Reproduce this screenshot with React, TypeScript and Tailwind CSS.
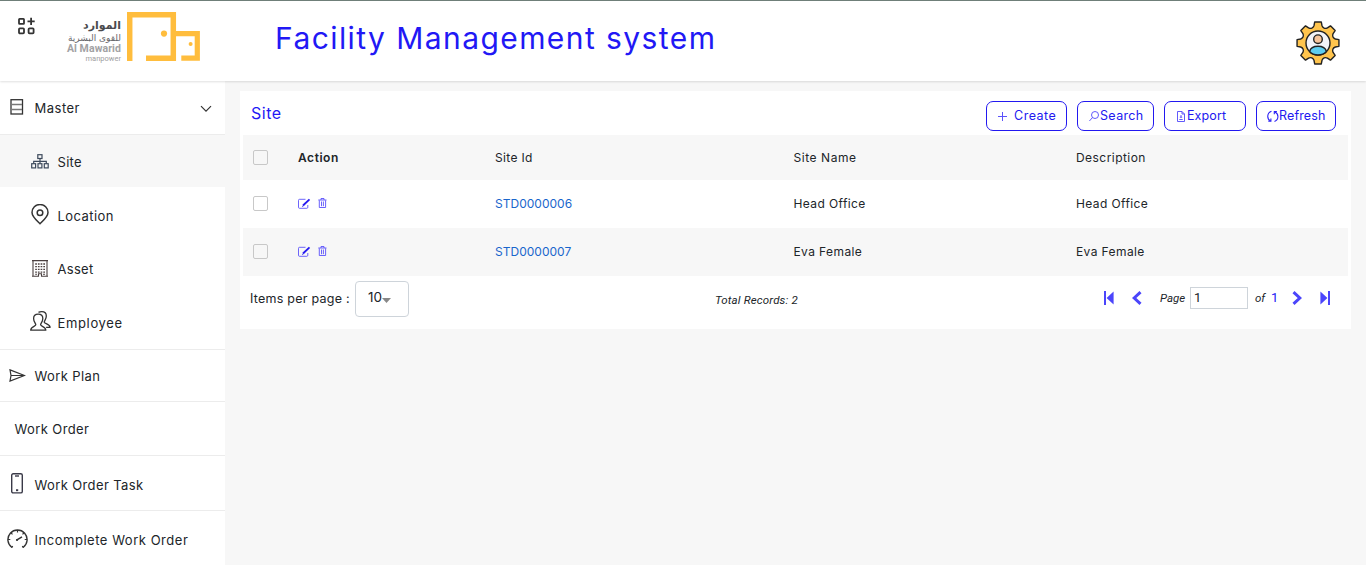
import React from "react";

type IconProps = { className?: string };

const AppsIcon = () => (
  <svg width="19" height="18" viewBox="0 0 19 18" fill="none" stroke="#333" strokeWidth="1.8">
    <rect x="2" y="1.9" width="5" height="5" rx="0.6" />
    <rect x="2" y="11.4" width="5" height="5" rx="0.9" />
    <rect x="11.6" y="11.4" width="5" height="5" rx="0.9" />
    <path d="M14.1 0.8v7.2M10.5 4.4h7.2" />
  </svg>
);

const LogoMark = () => (
  <svg width="74" height="50" viewBox="0 0 74 50" fill="none" stroke="#ffbd3d" strokeWidth="5.5">
    <path d="M2.7 49V2.8H46.3V46.2H19" />
    <path d="M46 21.7H70.3V46.2H54.3" strokeWidth="5.200" />
    <circle cx="37" cy="21.6" r="3.1" fill="#ffbd3d" stroke="none" />
    <circle cx="63.600" cy="32" r="2" fill="#ffbd3d" stroke="none" />
  </svg>
);

const gearPath = (() => {
  const pts: string[] = [];
  for (let i = 0; i < 8; i++) {
    const base = (i * Math.PI) / 4 - Math.PI / 2;
    const at = (r: number, d: number) => {
      const a = base + (d * Math.PI) / 180;
      return `${(22 + r * Math.cos(a)).toFixed(2)} ${(22 + r * Math.sin(a)).toFixed(2)}`;
    };
    pts.push(`${i === 0 ? "M" : "L"}${at(17.8, -13)}`);
    pts.push(`L${at(21.2, -9)}L${at(21.2, 9)}L${at(17.8, 13)}`);
    pts.push(`Q${at(14.6, 22.5)} ${at(17.8, 32)}`);
  }
  return pts.join("") + "Z";
})();

const ProfileIcon = () => (
  <svg width="44" height="44" viewBox="0 0 44 44" stroke="#222" strokeWidth="1.4" strokeLinejoin="round">
    <path d={gearPath} fill="#ffc44d" />
    <circle cx="22" cy="22" r="12" fill="#f3f3f8" />
    <path d="M13.6 30.5C14.5 26.8 18 25.3 22 25.3s7.500 1.500 8.400 5.200C28.500 32.700 25.500 34 22 34s-6.500-1.300-8.400-3.500z" fill="#5ecdf0" />
    <circle cx="22" cy="18.200" r="4.300" fill="#f6c49c" />
  </svg>
);

const MasterIcon = () => (
  <svg width="14" height="16" viewBox="0 0 14 16" fill="none" stroke="#333">
    <rect x="1" y="0.700" width="11.500" height="14.300" strokeWidth="1.300" />
    <path d="M2 5.500h10M2 10.500h10" strokeWidth="1.500" stroke="#777" />
  </svg>
);

const ChevronIcon = () => (
  <svg width="12" height="8" viewBox="0 0 12 8" fill="none" stroke="#333" strokeWidth="1.200">
    <path d="M1 1.200l5 5 5-5" />
  </svg>
);

const SiteIcon = () => (
  <svg width="18" height="15" viewBox="0 0 18 15" fill="none" stroke="#3d4a5c" strokeWidth="1.200">
    <rect x="6.800" y="0.700" width="4.200" height="3.800" />
    <path d="M9 4.500v5M2.700 9.500V7.300h12.600v2.200" />
    <rect x="0.700" y="9.700" width="3.900" height="4.200" />
    <rect x="7" y="9.700" width="3.900" height="4.200" />
    <rect x="13.300" y="9.700" width="3.900" height="4.200" />
  </svg>
);

const LocationIcon = () => (
  <svg width="18" height="21" viewBox="0 0 18 21" fill="none" stroke="#333" strokeWidth="1.500">
    <path d="M9 19.800C7 17.800 1 12.800 1 8.500a8 8 0 0 1 16 0c0 4.300-6 9.300-8 11.300z" />
    <circle cx="9" cy="8.800" r="2.800" />
  </svg>
);

const AssetIcon = () => (
  <svg width="16" height="17" viewBox="0 0 16 17" fill="none" stroke="#4b4040" strokeWidth="1.100">
    <path d="M0 .600h16M1 .600V16M15 .600V16M0 16.300h6.500v-2.500h3v2.500H16" />
    <path d="M3.200 4h9.800M3.200 6.700h9.800M3.200 9.400h9.800M3.200 12.100h9.800" strokeWidth="1.300" strokeDasharray="1.700 1" />
    <path d="M3.200 14.300H5M11 14.300h2" />
  </svg>
);

const EmployeeIcon = () => (
  <svg width="21" height="20" viewBox="0 0 21 20" fill="none" stroke="#333" strokeWidth="1.300" strokeLinejoin="round">
    <path d="M5.800 13.800C5.700 12.300 3.600 10.700 3.600 7.400c0-3 1.900-4.300 4.600-4.300s4.600 1.300 4.600 4.300c0 3.300-2.100 4.900-2.200 6.400.1 1.600 5.200 1.700 5.200 5.400H.700c0-3.700 5-3.800 5.100-5.400z" />
    <path d="M8.500 1.400C9.300.900 10.500.700 11.800.700c2.700 0 4.500 1.300 4.500 4.200 0 3.300-2 4.800-2.100 6.300.1 1.600 5.700 1.600 5.900 5.200h-4" />
  </svg>
);

const SendIcon = () => (
  <svg width="17" height="13" viewBox="0 0 17 13" fill="none" stroke="#333" strokeWidth="1.200">
    <path d="M1 .900L15.500 6.500 1 12.100 2 6.500zM2.300 6.500h12" />
  </svg>
);

const PhoneIcon = () => (
  <svg width="12" height="21" viewBox="0 0 12 21" fill="none" stroke="#3a3a48" strokeWidth="1.400">
    <rect x=".700" y=".700" width="10.600" height="19.200" rx="1.500" />
    <path d="M4 3h4" />
    <path d="M5 17.200h2.200" strokeWidth="1.900" />
  </svg>
);

const GaugeIcon = () => (
  <svg width="21" height="20" viewBox="0 0 21 20" fill="none" stroke="#333" strokeWidth="1.400">
    <path d="M5 18.500A9.600 9.600 0 1 1 16 18.500" />
    <path d="M10.500 1v2.500M4 3.800l1.500 1.500M17 3.800l-1.500 1.500M1 10.500h2.300M20 10.500h-2.300M4.700 18.700l1-1.700M16.300 18.700l-1-1.700" strokeWidth="1.200" />
    <path d="M9.500 11.200L15 7.800" strokeWidth="1.500" />
    <circle cx="10" cy="11" r="1.100" fill="#333" stroke="none" />
  </svg>
);

const PlusIcon = () => (
  <svg width="9" height="9" viewBox="0 0 9 9" stroke="#5b52fb" strokeWidth="1">
    <path d="M4.500 0v9M0 4.500h9" />
  </svg>
);

const SearchIcon = () => (
  <svg width="10" height="11" viewBox="0 0 10 11" fill="none" stroke="#5048fa" strokeWidth=".9">
    <circle cx="6" cy="4" r="3.500" />
    <path d="M3.500 6.500L.400 10" />
  </svg>
);

const ExportIcon = () => (
  <svg width="8" height="11" viewBox="0 0 8 11" fill="none" stroke="#5048fa" strokeWidth=".9">
    <path d="M.500.500H5l2.500 2.500v7.500h-7zM5 .500V3h2.500M4 4v2.500M2.300 8.500h3.400M2.800 6.200h2.400" />
  </svg>
);

const RefreshIcon = () => (
  <svg width="12" height="13" viewBox="0 0 12 13" fill="none" stroke="#2b20f5" strokeWidth="1.100">
    <path d="M4.500 1.300C-.300 3-.300 9 3.500 10.800M7.500 11.500c4.500-1.800 4.500-7.500.5-9.500" />
    <path d="M3.900 8.500v2.600H1.300M7.300 4.200V1.600h2.600" />
  </svg>
);

const EditIcon = () => (
  <svg width="13" height="11" viewBox="0 0 13 11" fill="none" stroke="#4a40fa" strokeWidth="1">
    <path d="M7.500 1.300H1.500a1 1 0 0 0-1 1v7a1 1 0 0 0 1 1h7.300a1 1 0 0 0 1-1V7" strokeOpacity=".8" />
    <path d="M5 7.500L11.500 1.300" stroke="#2418f0" strokeWidth="1.800" />
    <path d="M4 8.400l1.300-.3" />
  </svg>
);

const TrashIcon = () => (
  <svg width="9" height="10" viewBox="0 0 9 10" fill="none" stroke="#5a50fb" strokeWidth=".9">
    <path d="M.300 2h8.200M3 2V.500h3V2M1.300 2.300v7.200h6.300V2.300M3.500 3.500v4.700M5.400 3.500v4.700" />
  </svg>
);

const FirstIcon = ({ className = "" }: IconProps) => (
  <svg className={className} width="10" height="14" viewBox="0 0 10 14" fill="#4b45fb">
    <path d="M0 0h2v14H0zM9.600 .500v13L2.600 7z" />
  </svg>
);

const PrevIcon = ({ className = "" }: IconProps) => (
  <svg className={className} width="10" height="14" viewBox="0 0 10 14" fill="none" stroke="#4b45fb" strokeWidth="3">
    <path d="M8.500 1.200L2.200 7l6.300 5.800" />
  </svg>
);

type Item = { label: string; icon?: React.ReactNode; row: string; text: string; slot: string };

const items: Item[] = [
  { label: "Master", icon: <MasterIcon />, row: "h-[54px] border-b border-[#ececec] pl-2.5", slot: "w-[24.500px] pb-0.5", text: "tracking-[0.500px]" },
  { label: "Site", icon: <SiteIcon />, row: "h-[52px] bg-[#f7f7f7] pl-[31px] pt-0.5", slot: "w-[26.500px] pb-0.5", text: "tracking-[0.300px]" },
  { label: "Location", icon: <LocationIcon />, row: "h-[54px] pl-[31px] pt-1", slot: "w-[26.500px] pb-1", text: "tracking-[0.450px]" },
  { label: "Asset", icon: <AssetIcon />, row: "h-[54px] pl-8 pt-0.5", slot: "w-[25.500px] pb-0.5", text: "tracking-[0.300px]" },
  { label: "Employee", icon: <EmployeeIcon />, row: "h-[55px] border-b border-[#ececec] pl-[30px] pt-0.5", slot: "w-[27.500px] pb-1", text: "tracking-[0.650px]" },
  { label: "Work Plan", icon: <SendIcon />, row: "h-[52px] border-b border-[#ececec] pl-[9px]", slot: "w-[25.500px]", text: "tracking-[0.400px]" },
  { label: "Work Order", row: "h-[54px] border-b border-[#ececec] pl-[14.500px]", slot: "", text: "tracking-[0.400px]" },
  { label: "Work Order Task", icon: <PhoneIcon />, row: "h-[55px] border-b border-[#ececec] pl-[11px] pt-1", slot: "w-[23.500px] pb-1", text: "tracking-[0.380px]" },
  { label: "Incomplete Work Order", icon: <GaugeIcon />, row: "h-[56px] pl-[7px] pt-0.5", slot: "w-[27.500px] pb-0.5", text: "tracking-[0.530px]" },
];

const Check = () => (
  <span className="block size-[15px] rounded-[2px] border border-[#c8c8c8]" />
);

const cols = "grid grid-cols-[45px_197px_298.500px_282.500px_1fr] items-center pl-2.5 text-[12px] text-[#212529]";

const rows = [
  { id: "STD0000006", name: "Head Office", bg: "bg-white" },
  { id: "STD0000007", name: "Eva Female", bg: "bg-[#f7f7f7]" },
];

const btn = "flex h-[30px] items-center rounded-[7px] border border-[#2218f0] text-[12.500px] text-[#2218f0]";

export default function App() {
  return (
    <div className="flex h-[565px] w-[1366px] flex-col overflow-hidden bg-[#f7f7f7] font-['Inter',sans-serif] text-[#212529]">
      <header className="z-10 flex h-[81px] shrink-0 items-start border-t border-[#6f7f79] bg-white shadow-[0_1px_2px_rgba(0,0,0,0.12)]">
        <div className="w-[18px] pl-[17px] pt-4"><AppsIcon /></div>
        <div className="flex w-[103px] flex-col items-end pt-[18px] text-right">
          <span dir="rtl" className="whitespace-nowrap font-['DejaVu_Sans',sans-serif] text-[11px] font-bold leading-[14px] text-[#4a4a4d]">الموارد</span>
          <span dir="rtl" className="whitespace-nowrap font-['DejaVu_Sans',sans-serif] text-[9px] leading-[10px] text-[#66666a]">للقوى البشرية</span>
          <span className="whitespace-nowrap font-['Roboto',sans-serif] text-[10.500px] font-bold leading-[12px] tracking-[0.100px] text-[#a2a2a4]">Al Mawarid</span>
          <span className="whitespace-nowrap font-['Roboto',sans-serif] text-[7.500px] leading-[7px] text-[#a0a0a2]">manpower</span>
        </div>
        <div className="pl-1.5 pt-[11px]"><LogoMark /></div>
        <h1 className="whitespace-nowrap pl-[74px] pt-[18px] text-[30px] leading-[38px] tracking-[1.420px] text-[#2218f5]">Facility Management system</h1>
        <div className="ml-auto pr-[26px] pt-5"><ProfileIcon /></div>
      </header>

      <div className="flex min-h-0 flex-1">
        <nav className="w-[225px] shrink-0 bg-white">
          {items.map((it) => (
            <div key={it.label} className={`flex items-center ${it.row}`}>
              {it.icon && <span className={`shrink-0 ${it.slot}`}>{it.icon}</span>}
              <span className={`whitespace-nowrap pt-0.5 text-[13px] ${it.text}`}>{it.label}</span>
              {it.label === "Master" && <span className="ml-auto pr-[13px] pt-0.5"><ChevronIcon /></span>}
            </div>
          ))}
        </nav>

        <main className="flex-1 pl-[15px] pt-2.5">
          <section className="h-[238px] w-[1111px] bg-white px-[3px]">
            <div className="flex h-11 items-start pl-2 pr-3">
              <h2 className="pt-2.5 text-[16px] leading-6 tracking-[0.500px] text-[#2218f5]">Site</h2>
              <div className="ml-auto flex gap-2.5 pt-2.5">
                <button className={`${btn} w-[81px] pl-[11px] tracking-[0.500px]`}><PlusIcon /><span className="pl-[7px]">Create</span></button>
                <button className={`${btn} w-[77px] pl-[11px] tracking-[0.350px]`}><SearchIcon /><span className="pl-px">Search</span></button>
                <button className={`${btn} w-[82px] pl-3 tracking-[0.100px]`}><ExportIcon /><span className="pl-0.5">Export</span></button>
                <button className={`${btn} w-[80px] pl-2.5 tracking-[0.150px]`}><RefreshIcon /><span>Refresh</span></button>
              </div>
            </div>

            <div className={`${cols} h-[45px] bg-[#f7f7f7] tracking-[0.350px]`}>
              <Check />
              <span className="font-semibold tracking-[0.550px]">Action</span>
              <span>Site Id</span>
              <span className="tracking-[0.550px]">Site Name</span>
              <span className="tracking-[0.450px]">Description</span>
            </div>
            {rows.map((r) => (
              <div key={r.id} className={`${cols} h-12 tracking-[0.400px] ${r.bg}`}>
                <span className="pb-px"><Check /></span>
                <span className="flex items-center gap-[6.500px] pb-0.5"><EditIcon /><TrashIcon /></span>
                <a className="tracking-[0.020px] text-[#1a66cc]">{r.id}</a>
                <span>{r.name}</span>
                <span>{r.name}</span>
              </div>
            ))}

            <div className="flex h-[53px] items-start pl-[7px]">
              <span className="w-[105px] whitespace-nowrap pt-[14px] text-[12.500px] leading-[18px] tracking-[0.250px]">Items per page :</span>
              <div className="mt-[5px] flex h-9 w-[54px] items-center rounded-[4px] border border-[#ced4da] pl-3">
                <span className="pb-0.5 text-[13.500px] leading-none">10</span>
                <svg className="mt-0.5" width="9" height="5" viewBox="0 0 9 5" fill="#888"><path d="M0 0h9L4.500 5z" /></svg>
              </div>
              <span className="w-[388px] whitespace-nowrap pl-[306px] pt-4 font-['Roboto',sans-serif] text-[11.500px] italic leading-4 tracking-[0.160px]">Total Records: 2</span>
              <div className="ml-auto flex h-11 items-center pr-[18px] font-['Roboto',sans-serif] text-[11.500px]">
                <FirstIcon />
                <PrevIcon className="ml-[18px]" />
                <span className="ml-[18px] w-[30px] pt-px italic">Page</span>
                <span className="flex h-[22px] w-[58px] items-center border border-[#ced4da] pl-[3px] text-[13px]">1</span>
                <span className="ml-[7px] w-4 pt-px italic">of</span>
                <span className="w-[21px] text-[13px] text-[#2218f5]">1</span>
                <PrevIcon className="rotate-180" />
                <FirstIcon className="ml-[18px] rotate-180" />
              </div>
            </div>
          </section>
        </main>
      </div>
    </div>
  );
}
